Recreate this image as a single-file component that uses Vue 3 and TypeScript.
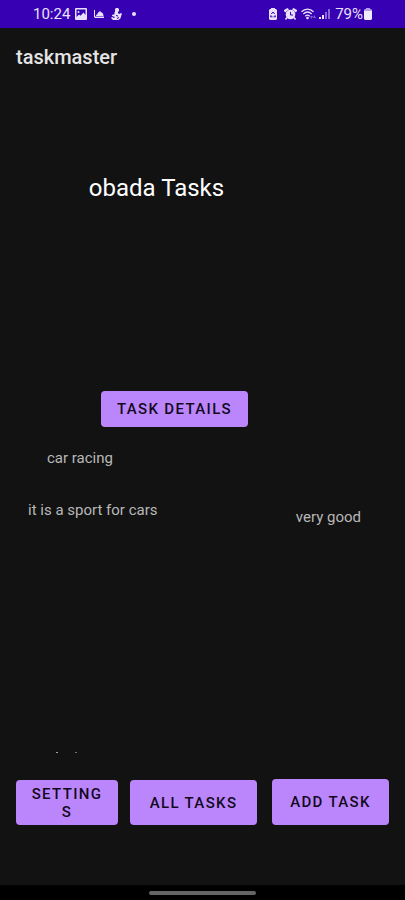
<script setup lang="ts">
interface Task {
  title: string
  body: string
  state: string
}

const owner = 'obada'
const tasks: Task[] = [
  { title: 'car racing', body: 'it is a sport for cars', state: 'very good' },
]
</script>

<template>
  <div class="screen">
    <div class="status">
      <div class="group">
        <span class="clock">10:24</span>
        <svg class="image" width="12" height="12" viewBox="0 0 12 12" aria-hidden="true">
          <path fill="#e9e0fb" fill-rule="evenodd" d="M1 0h10a1 1 0 0 1 1 1v10a1 1 0 0 1-1 1H1a1 1 0 0 1-1-1V1a1 1 0 0 1 1-1ZM1.500 1.500v7.500L4 6.500l1.500 1.200L8.500 4.500l2 2.500V1.500ZM3.500 3a1 1 0 1 1 0 2 1 1 0 0 1 0-2Z" />
        </svg>
        <svg class="dish" width="10" height="10" viewBox="0 0 10 10" aria-hidden="true">
          <path fill="#e9e0fb" d="M0 1h1v6.500h9V9H1L0 8ZM2 7c0-1 .6-1.500 1.300-1.500C3.600 3.500 4.800 3 5.500 3V2h1v1C8.500 3.200 9.500 4.800 9.500 7Z" />
        </svg>
        <svg class="figure" width="11" height="12" viewBox="0 0 11 12" aria-hidden="true">
          <path fill="#e9e0fb" d="M5 0h2l1 1v2L7 4v1l1 1 2-1 1 1-1 2v1l-1 2-2 1H2L0 10l1-1 2 1 1-1-3-1V7l3-1-1-1 1-1V1Z" />
          <path stroke="#3700b3" stroke-width="1" fill="none" d="M5 7.500 7 8M6 10.500l2-1" />
        </svg>
        <span class="more"></span>
      </div>
      <div class="group">
        <svg class="saver" width="10" height="12" viewBox="0 0 10 12" aria-hidden="true">
          <path fill="#e9e0fb" d="M3 0h4v1h1l1 1v9l-1 1H2l-1-1V2l1-1h1Z" />
          <path fill="none" stroke="#3700b3" d="m3.300 6 1.700-2 1.700 2M3 7.200l-.5 1.600h2M7 7.200l.5 1.600h-2" />
        </svg>
        <svg class="alarm" width="13" height="12" viewBox="0 0 13 12" aria-hidden="true">
          <path fill="#e9e0fb" d="M3.500 0 5 1.200 1.200 4.500 0 3V2ZM9.500 0 8 1.200l3.800 3.300L13 3V2Z" />
          <circle cx="6.500" cy="6.500" r="4.800" fill="#e9e0fb" />
          <path d="M3 9.500 1.500 11.500M10 9.500l1.500 2" stroke="#e9e0fb" stroke-width="1.500" />
          <path d="M6.500 3.800V7H9" fill="none" stroke="#3700b3" />
        </svg>
        <svg class="wifi" width="15" height="12" viewBox="0 0 15 12" aria-hidden="true">
          <path fill="none" stroke="#e9e0fb" stroke-width="1.300" d="M.5 3.800C4 .2 9 .2 12.500 3.800M2.300 6C5 3.500 8 3.500 10.700 6M4.300 8.200c1.500-1.400 3-1.400 4.400 0" />
          <circle cx="6.500" cy="10" r="1.300" fill="#e9e0fb" />
          <path fill="#8060d0" d="m9 8 1.500 3L12 8ZM12 10l1.300-3L15 10Z" />
        </svg>
        <svg class="signal" width="12" height="12" viewBox="0 0 12 12" aria-hidden="true">
          <path fill="#e9e0fb" d="M0 9h2v2H0ZM3 7h2v4H3Z" />
          <path fill="#8b68d8" d="M6 4h2v7H6ZM9 1h2v10H9Z" />
        </svg>
        <span class="percent">79%</span>
        <svg class="battery" width="8" height="12" viewBox="0 0 8 12" aria-hidden="true">
          <path fill="#b49ae8" d="M2 0h4v1h1l1 1v2H0V2l1-1h1Z" />
          <path fill="#f0eafd" d="M0 3h8v8l-1 1H1l-1-1Z" />
        </svg>
      </div>
    </div>

    <header class="bar">taskmaster</header>

    <main class="content">
      <h1 class="heading">{{ owner }} Tasks</h1>
      <button type="button" class="btn details">TASK DETAILS</button>

      <section class="list">
        <article v-for="task in tasks" :key="task.title" class="task">
          <h2 class="title">{{ task.title }}</h2>
          <div class="row">
            <p class="body">{{ task.body }}</p>
            <p class="state">{{ task.state }}</p>
          </div>
        </article>
        <svg class="peek" width="22" height="2" viewBox="0 0 22 2" aria-hidden="true">
          <path fill="#a0a0a0" d="M0 0h2v1H0Z" />
          <path fill="#707070" d="M19 0h2v1h-2Z" />
        </svg>
      </section>

      <div class="actions">
        <button type="button" class="btn settings">SETTINGS</button>
        <button type="button" class="btn all">ALL TASKS</button>
        <button type="button" class="btn add">ADD TASK</button>
      </div>
    </main>

    <div class="gesture"><span class="pill"></span></div>
  </div>
</template>

<style>
body {
  background: #121212;
}
</style>

<style scoped>
.screen {
  display: flex;
  flex-direction: column;
  min-height: 100vh;
  background: #121212;
  color: #b8b8b8;
  font-family: Roboto, "Noto Sans", sans-serif;
  font-size: 15px;
  line-height: 20px;
}
.status {
  display: flex;
  justify-content: space-between;
  height: 28px;
  padding: 0 33px;
  background: #3700b3;
  color: #e9e0fb;
}
.group {
  display: flex;
  align-items: center;
}
.image {
  margin-left: 5px;
}
.dish {
  margin-left: 7px;
}
.figure {
  margin-left: 7px;
}
.more {
  width: 4px;
  height: 4px;
  margin-left: 10px;
  border-radius: 50%;
  background: #e9e0fb;
}
.alarm {
  margin-left: 6px;
}
.wifi {
  margin-left: 4px;
}
.signal {
  margin-left: 3px;
}
.percent {
  margin-left: 4px;
}
.battery {
  margin-left: 1px;
}
.bar {
  padding: 16px;
  color: #e4e4e4;
  font-size: 20px;
  font-weight: 500;
  line-height: 26px;
}
.content {
  display: flex;
  flex: 1;
  flex-direction: column;
}
.heading {
  margin: 86px 92px 0 0;
  color: #fff;
  font-size: 24px;
  font-weight: 400;
  line-height: 32px;
  text-align: center;
}
.btn {
  padding: 0 16px;
  border: 0;
  border-radius: 4px;
  background: #bb86fc;
  color: #13091c;
  font-family: inherit;
  font-size: 15px;
  font-weight: 500;
  line-height: 18px;
  letter-spacing: 0.09em;
  overflow-wrap: anywhere;
}
.details {
  align-self: center;
  height: 36px;
  margin: 187px 56px 0 0;
}
.list {
  display: flex;
  flex: 1;
  flex-direction: column;
  justify-content: space-between;
  padding-top: 21px;
}
.title,
.body,
.state {
  margin: 0;
  font-size: 15px;
  font-weight: 400;
}
.title {
  padding-left: 47px;
}
.row {
  display: flex;
  justify-content: space-between;
  padding: 32px 44px 0 28px;
}
.state {
  margin-top: 7px;
}
.peek {
  margin-left: 56px;
}
.actions {
  display: grid;
  grid-template-columns: 102fr 139fr 132fr;
  align-items: end;
  padding: 25px 16px 60px;
}
.actions .btn {
  min-width: 0;
  height: 45px;
}
.actions .settings {
  padding: 0 12px;
}
.actions .all {
  margin-left: 12px;
}
.actions .add {
  height: 46px;
  margin-left: 15px;
}
.gesture {
  display: flex;
  align-items: center;
  justify-content: center;
  height: 15px;
  background: #000;
}
.pill {
  width: 107px;
  height: 4px;
  border-radius: 2px;
  background: #666;
}
</style>
